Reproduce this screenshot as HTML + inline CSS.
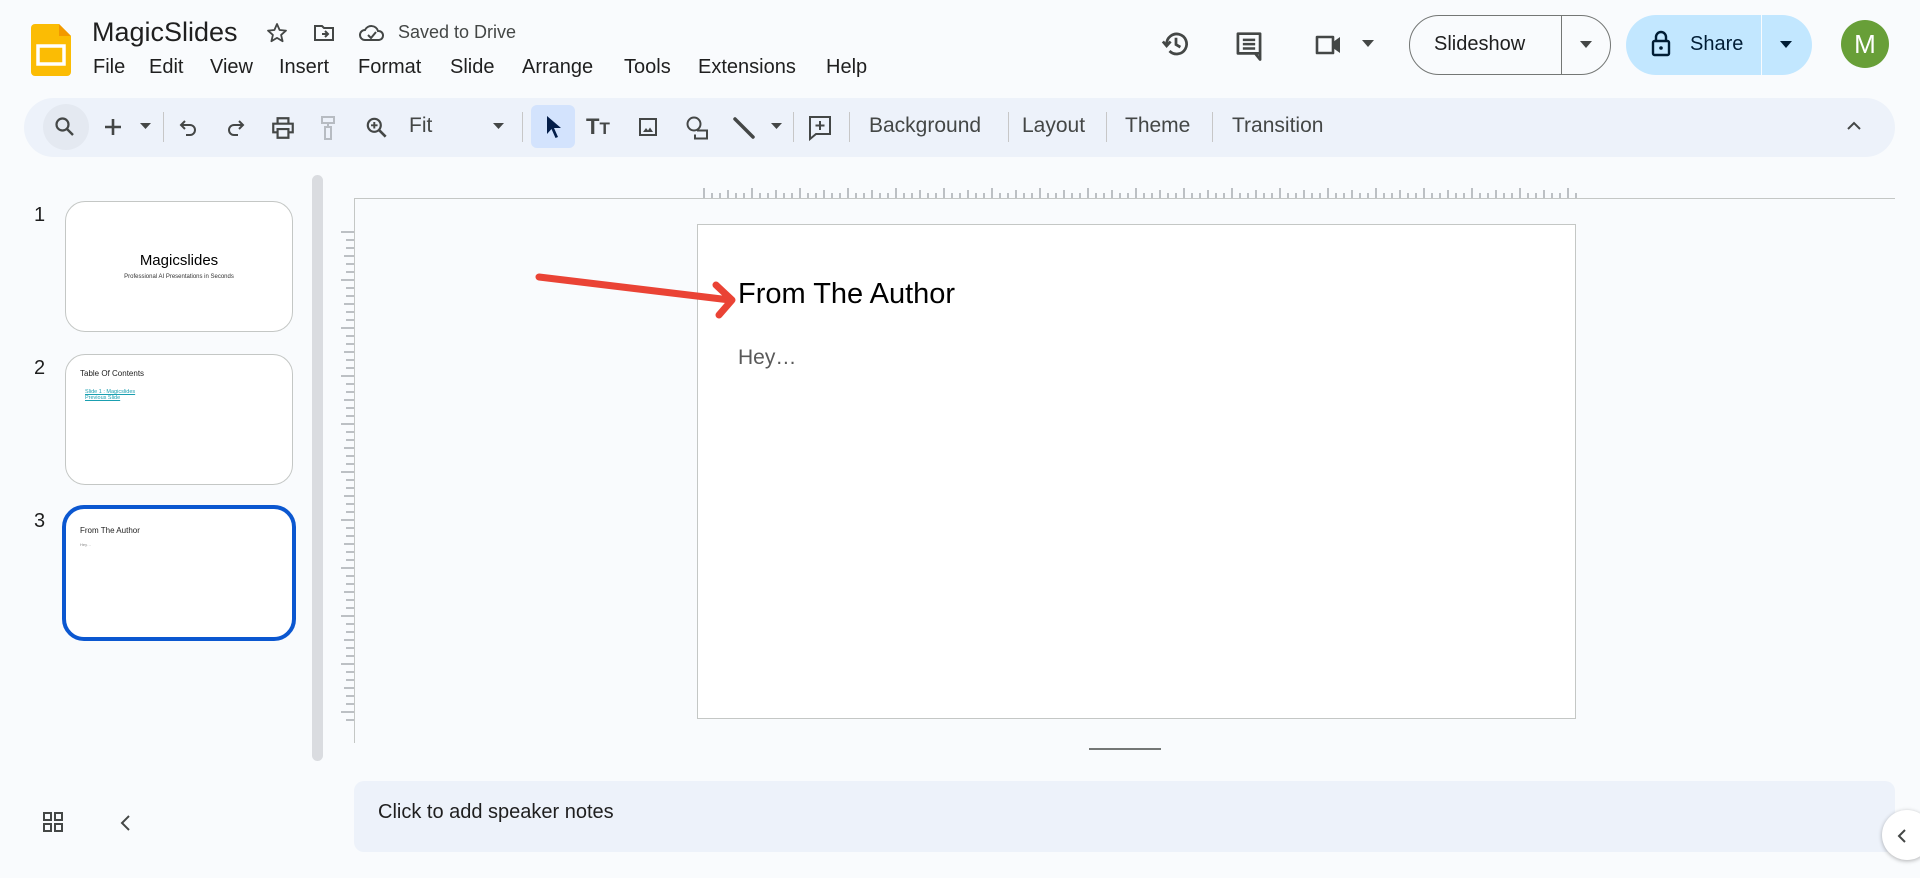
<!DOCTYPE html>
<html><head><meta charset="utf-8"><style>
*{box-sizing:border-box;margin:0;padding:0}
body{width:1920px;height:878px;overflow:hidden;background:#f9fbfd;font-family:"Liberation Sans",Arial,sans-serif;color:#1f1f1f;position:relative}
.a{position:absolute}
.tb{left:24px;top:98px;width:1871px;height:59px;border-radius:30px;background:#edf2fa}
.sep{position:absolute;top:112px;width:1px;height:30px;background:#c7c7c7}
.tt{position:absolute;top:114px;font-size:21px;color:#444746}
.ic{position:absolute}
.thumb{position:absolute;left:65px;width:228px;height:131px;background:#fff;border:1px solid #c4c7c5;border-radius:20px}
.num{position:absolute;left:34px;font-size:20px;color:#1f1f1f}
</style></head><body>
<svg class="a" style="left:31px;top:24px" width="40" height="52" viewBox="0 0 40 52"><path d="M4 0h24l12 12v36a4 4 0 0 1-4 4H4a4 4 0 0 1-4-4V4a4 4 0 0 1 4-4z" fill="#fbbc04"/><path d="M28 0l12 12H28z" fill="#f29900"/><rect x="7" y="22" width="26" height="18" fill="none" stroke="#fff" stroke-width="3.5"/></svg>
<div class="a" style="left:92px;top:17px;font-size:27px;color:#1f1f1f">MagicSlides</div>
<svg class="a" style="left:265px;top:21px" width="24" height="24" viewBox="0 0 24 24"><path d="M12 3l2.6 6 6.4.6-4.9 4.3 1.5 6.3L12 16.9 6.4 20.2l1.5-6.3L3 9.6l6.4-.6z" fill="none" stroke="#444746" stroke-width="1.8" stroke-linejoin="round"/></svg>
<svg class="a" style="left:312px;top:21px" width="24" height="24" viewBox="0 0 24 24"><path d="M3 5h7l2 2h9v12H3z" fill="none" stroke="#444746" stroke-width="2"/><path d="M10 13h6M13 10l3 3-3 3" fill="none" stroke="#444746" stroke-width="2"/></svg>
<svg class="a" style="left:358px;top:21px" width="28" height="24" viewBox="0 0 28 24"><path d="M7 19a5 5 0 0 1 0-10 7 7 0 0 1 13 1 4.5 4.5 0 0 1 1 9z" fill="none" stroke="#444746" stroke-width="2"/><path d="M10 14l3 3 5-6" fill="none" stroke="#444746" stroke-width="2"/></svg>
<div class="a" style="left:398px;top:22px;font-size:18px;color:#444746">Saved to Drive</div>
<div class="a" style="left:93px;top:56px;font-size:20px;color:#1f1f1f">
<span style="position:absolute;left:0">File</span><span style="position:absolute;left:56px">Edit</span><span style="position:absolute;left:117px">View</span><span style="position:absolute;left:186px">Insert</span><span style="position:absolute;left:265px">Format</span><span style="position:absolute;left:357px">Slide</span><span style="position:absolute;left:429px">Arrange</span><span style="position:absolute;left:531px">Tools</span><span style="position:absolute;left:605px">Extensions</span><span style="position:absolute;left:733px">Help</span></div>
<svg class="a" style="left:1161px;top:29px" width="30" height="30" viewBox="0 0 24 24"><path d="M4.5 12a8 8 0 1 1 2.3 5.6" fill="none" stroke="#444746" stroke-width="2.2"/><path d="M1.5 10l3 3.5 3.2-3.5" fill="none" stroke="#444746" stroke-width="2.2"/><path d="M12 7v5.5l3.5 2" fill="none" stroke="#444746" stroke-width="2.2"/></svg>
<svg class="a" style="left:1234px;top:30px" width="30" height="32" viewBox="0 0 24 26"><path d="M3 3h18v16H3z M21 19v5l-4-5" fill="none" stroke="#444746" stroke-width="2.2" stroke-linejoin="round"/><path d="M7 8h10M7 11.5h10M7 15h10" stroke="#444746" stroke-width="2"/></svg>
<svg class="a" style="left:1314px;top:31px" width="32" height="28" viewBox="0 0 32 28"><path d="M3 6h16v16H3z" fill="none" stroke="#444746" stroke-width="2.6" stroke-linejoin="round"/><path d="M19 11l7-5v16l-7-5z" fill="#444746"/></svg>
<svg class="a" style="left:1362px;top:40px" width="12" height="8"><path d="M0 0h12L6 7z" fill="#444746"/></svg>
<div class="a" style="left:1409px;top:15px;width:202px;height:60px;border:1px solid #747775;border-radius:30px"></div>
<div class="a" style="left:1561px;top:15px;width:1px;height:60px;background:#747775"></div>
<div class="a" style="left:1434px;top:33px;font-size:20px;color:#1f1f1f">Slideshow</div>
<svg class="a" style="left:1580px;top:41px" width="12" height="8"><path d="M0 0h12L6 7z" fill="#444746"/></svg>
<div class="a" style="left:1626px;top:15px;width:186px;height:60px;background:#c2e7ff;border-radius:30px"></div>
<div class="a" style="left:1761px;top:15px;width:1px;height:60px;background:#f9fbfd"></div>
<svg class="a" style="left:1651px;top:30px" width="20" height="28" viewBox="0 0 20 28"><rect x="2" y="11" width="16" height="14" rx="1.5" fill="none" stroke="#001d35" stroke-width="2.4"/><path d="M5 11V7a5 5 0 0 1 10 0v4" fill="none" stroke="#001d35" stroke-width="2.4"/><circle cx="10" cy="18" r="1.8" fill="#001d35"/></svg>
<div class="a" style="left:1690px;top:33px;font-size:20px;color:#001d35">Share</div>
<svg class="a" style="left:1780px;top:41px" width="12" height="8"><path d="M0 0h12L6 7z" fill="#001d35"/></svg>
<div class="a" style="left:1841px;top:20px;width:48px;height:48px;border-radius:50%;background:#689f38;color:#fff;font-size:26px;text-align:center;line-height:48px">M</div>
<div class="a tb"></div>
<div class="a" style="left:43px;top:104px;width:46px;height:46px;border-radius:23px;background:#e4e9f1"></div>
<svg class="ic" style="left:53px;top:115px" width="24" height="24" viewBox="0 0 24 24"><circle cx="9.5" cy="9.5" r="6" fill="none" stroke="#444746" stroke-width="2.2"/><path d="M14 14l6 6" stroke="#444746" stroke-width="2.4"/></svg>
<svg class="ic" style="left:102px;top:116px" width="22" height="22" viewBox="0 0 22 22"><path d="M11 3v16M3 11h16" stroke="#444746" stroke-width="2.6"/></svg>
<svg class="ic" style="left:140px;top:123px" width="11" height="7"><path d="M0 0h11L5.5 6z" fill="#444746"/></svg>
<div class="sep" style="left:163px"></div>
<svg class="ic" style="left:177px;top:116px" width="24" height="24" viewBox="0 0 24 24"><path d="M8 5L4 9l4 4" fill="none" stroke="#444746" stroke-width="2"/><path d="M4 9h9a5 5 0 0 1 0 10H9" fill="none" stroke="#444746" stroke-width="2"/></svg>
<svg class="ic" style="left:223px;top:116px" width="24" height="24" viewBox="0 0 24 24"><path d="M16 5l4 4-4 4" fill="none" stroke="#444746" stroke-width="2"/><path d="M20 9h-9a5 5 0 0 0 0 10h4" fill="none" stroke="#444746" stroke-width="2"/></svg>
<svg class="ic" style="left:270px;top:115px" width="26" height="26" viewBox="0 0 24 24"><path d="M7 8V3h10v5M7 16H3V8h18v8h-4" fill="none" stroke="#444746" stroke-width="2"/><path d="M7 13h10v8H7z" fill="none" stroke="#444746" stroke-width="2"/></svg>
<svg class="ic" style="left:316px;top:115px" width="24" height="26" viewBox="0 0 24 26"><path d="M6 2h12v6H6zM12 8v4M9 12h6v12H9z" fill="none" stroke="#b7bcc2" stroke-width="2"/></svg>
<svg class="ic" style="left:364px;top:115px" width="26" height="26" viewBox="0 0 24 24"><circle cx="9.5" cy="9.5" r="6" fill="none" stroke="#444746" stroke-width="2"/><path d="M14 14l6 6" stroke="#444746" stroke-width="2.4"/><path d="M9.5 6.5v6M6.5 9.5h6" stroke="#444746" stroke-width="1.8"/></svg>
<div class="tt" style="left:409px">Fit</div>
<svg class="ic" style="left:493px;top:123px" width="11" height="7"><path d="M0 0h11L5.5 6z" fill="#444746"/></svg>
<div class="sep" style="left:522px"></div>
<div class="a" style="left:531px;top:105px;width:44px;height:43px;border-radius:6px;background:#d3e3fd"></div>
<svg class="ic" style="left:543px;top:114px" width="22" height="26" viewBox="0 0 22 26"><path d="M4 2l14 12h-7l4 9-2.5 1-4-9L4 20z" fill="#041e49"/></svg>
<div class="a" style="left:586px;top:114px;font-size:22px;font-weight:bold;color:#444746">T<span style="font-size:17px">T</span></div>
<svg class="ic" style="left:636px;top:115px" width="24" height="24" viewBox="0 0 24 24"><rect x="4" y="4" width="16" height="16" fill="none" stroke="#444746" stroke-width="2"/><path d="M7 17l3-4 2 2.5 2-3 3 4.5z" fill="#444746"/></svg>
<svg class="ic" style="left:684px;top:114px" width="28" height="28" viewBox="0 0 28 28"><circle cx="10" cy="10" r="6.5" fill="none" stroke="#444746" stroke-width="2"/><path d="M13 16.5h10v8H11v-4" fill="none" stroke="#444746" stroke-width="2"/></svg>
<svg class="ic" style="left:730px;top:114px" width="28" height="28" viewBox="0 0 28 28"><path d="M5 5l18 18" stroke="#444746" stroke-width="3.5" stroke-linecap="round"/></svg>
<svg class="ic" style="left:771px;top:123px" width="11" height="7"><path d="M0 0h11L5.5 6z" fill="#444746"/></svg>
<div class="sep" style="left:793px"></div>
<svg class="ic" style="left:807px;top:114px" width="26" height="28" viewBox="0 0 26 28"><path d="M3 3h20v17H9l-6 5z" fill="none" stroke="#444746" stroke-width="2"/><path d="M13 7v9M8.5 11.5h9" stroke="#444746" stroke-width="2"/></svg>
<div class="sep" style="left:849px"></div>
<div class="tt" style="left:869px">Background</div>
<div class="sep" style="left:1008px"></div>
<div class="tt" style="left:1022px">Layout</div>
<div class="sep" style="left:1106px"></div>
<div class="tt" style="left:1125px">Theme</div>
<div class="sep" style="left:1212px"></div>
<div class="tt" style="left:1232px">Transition</div>
<svg class="ic" style="left:1846px;top:121px" width="16" height="10"><path d="M2 8l6-6 6 6" fill="none" stroke="#444746" stroke-width="2"/></svg>
<div class="num" style="top:204px">1</div>
<div class="thumb" style="top:201px"><div style="position:absolute;top:50px;width:100%;text-align:center;font-size:15px;color:#000">Magicslides</div><div style="position:absolute;top:72px;width:100%;text-align:center;font-size:6px;color:#333">Professional AI Presentations in Seconds</div></div>
<div class="num" style="top:357px">2</div>
<div class="thumb" style="top:354px"><div style="position:absolute;left:14px;top:14px;font-size:8px;color:#222">Table Of Contents</div><div style="position:absolute;left:19px;top:34px;font-size:5.5px;color:#1a9fb0;text-decoration:underline;line-height:6px">Slide 1 : Magicslides<br>Previous Slide</div></div>
<div class="num" style="top:510px">3</div>
<div class="thumb" style="top:505px;left:62px;width:234px;height:136px;border:4px solid #0b57d0;border-radius:22px"><div style="position:absolute;left:14px;top:17px;font-size:8px;color:#222">From The Author</div><div style="position:absolute;left:14px;top:33px;font-size:4px;color:#888">Hey…</div></div>
<div class="a" style="left:312px;top:175px;width:11px;height:586px;border-radius:6px;background:#dadce0"></div>
<div class="a" style="left:354px;top:198px;width:1541px;height:1px;background:#c4c7c5"></div>
<div class="a" style="left:354px;top:198px;width:1px;height:545px;background:#c4c7c5"></div>
<svg class="a" style="left:700px;top:184px" width="880" height="15">
<g stroke="#80868b" stroke-width="1">
<path d="M4 14V4M12 14V9M20 14V9M28 14V6M36 14V9M44 14V9M52 14V4M60 14V9M68 14V9M76 14V6M84 14V9M92 14V9M100 14V4M108 14V9M116 14V9M124 14V6M132 14V9M140 14V9M148 14V4M156 14V9M164 14V9M172 14V6M180 14V9M188 14V9M196 14V4M204 14V9M212 14V9M220 14V6M228 14V9M236 14V9M244 14V4M252 14V9M260 14V9M268 14V6M276 14V9M284 14V9M292 14V4M300 14V9M308 14V9M316 14V6M324 14V9M332 14V9M340 14V4M348 14V9M356 14V9M364 14V6M372 14V9M380 14V9M388 14V4M396 14V9M404 14V9M412 14V6M420 14V9M428 14V9M436 14V4M444 14V9M452 14V9M460 14V6M468 14V9M476 14V9M484 14V4M492 14V9M500 14V9M508 14V6M516 14V9M524 14V9M532 14V4M540 14V9M548 14V9M556 14V6M564 14V9M572 14V9M580 14V4M588 14V9M596 14V9M604 14V6M612 14V9M620 14V9M628 14V4M636 14V9M644 14V9M652 14V6M660 14V9M668 14V9M676 14V4M684 14V9M692 14V9M700 14V6M708 14V9M716 14V9M724 14V4M732 14V9M740 14V9M748 14V6M756 14V9M764 14V9M772 14V4M780 14V9M788 14V9M796 14V6M804 14V9M812 14V9M820 14V4M828 14V9M836 14V9M844 14V6M852 14V9M860 14V9M868 14V4M876 14V9"/></g></svg>
<svg class="a" style="left:341px;top:228px" width="14" height="500">
<g stroke="#80868b" stroke-width="1">
<path d="M0 4H13M5 12H13M5 20H13M3 28H13M5 36H13M5 44H13M0 52H13M5 60H13M5 68H13M3 76H13M5 84H13M5 92H13M0 100H13M5 108H13M5 116H13M3 124H13M5 132H13M5 140H13M0 148H13M5 156H13M5 164H13M3 172H13M5 180H13M5 188H13M0 196H13M5 204H13M5 212H13M3 220H13M5 228H13M5 236H13M0 244H13M5 252H13M5 260H13M3 268H13M5 276H13M5 284H13M0 292H13M5 300H13M5 308H13M3 316H13M5 324H13M5 332H13M0 340H13M5 348H13M5 356H13M3 364H13M5 372H13M5 380H13M0 388H13M5 396H13M5 404H13M3 412H13M5 420H13M5 428H13M0 436H13M5 444H13M5 452H13M3 460H13M5 468H13M5 476H13M0 484H13M5 492H13"/></g></svg>
<div class="a" style="left:697px;top:224px;width:879px;height:495px;background:#fff;border:1px solid #c4c7c5"></div>
<div class="a" style="left:738px;top:278px;font-size:29px;color:#000">From The Author</div>
<div class="a" style="left:738px;top:346px;font-size:21px;color:#595959">Hey…</div>
<svg class="a" style="left:530px;top:265px" width="215" height="60"><g stroke="#ea4335" stroke-width="7" stroke-linecap="round" stroke-linejoin="round" fill="none"><path d="M9 12L200 35"/><path d="M186 20L202 35L189 50"/></g></svg>
<div class="a" style="left:1089px;top:748px;width:72px;height:2px;background:#747775"></div>
<div class="a" style="left:354px;top:781px;width:1541px;height:71px;border-radius:10px;background:#edf2fa"></div>
<div class="a" style="left:378px;top:801px;font-size:20px;color:#1f1f1f">Click to add speaker notes</div>
<svg class="a" style="left:42px;top:811px" width="22" height="22" viewBox="0 0 22 22"><g fill="none" stroke="#444746" stroke-width="2"><rect x="2" y="2" width="7" height="7"/><rect x="13" y="2" width="7" height="7"/><rect x="2" y="13" width="7" height="7"/><rect x="13" y="13" width="7" height="7"/></g></svg>
<svg class="a" style="left:119px;top:814px" width="12" height="18"><path d="M10 2L3 9l7 7" fill="none" stroke="#444746" stroke-width="2"/></svg>
<div class="a" style="left:1882px;top:810px;width:50px;height:50px;border-radius:50%;background:#fff;box-shadow:0 1px 4px rgba(0,0,0,.3)"></div>
<svg class="a" style="left:1896px;top:828px" width="12" height="16"><path d="M9 2L3 8l6 6" fill="none" stroke="#444746" stroke-width="2"/></svg>
</body></html>
